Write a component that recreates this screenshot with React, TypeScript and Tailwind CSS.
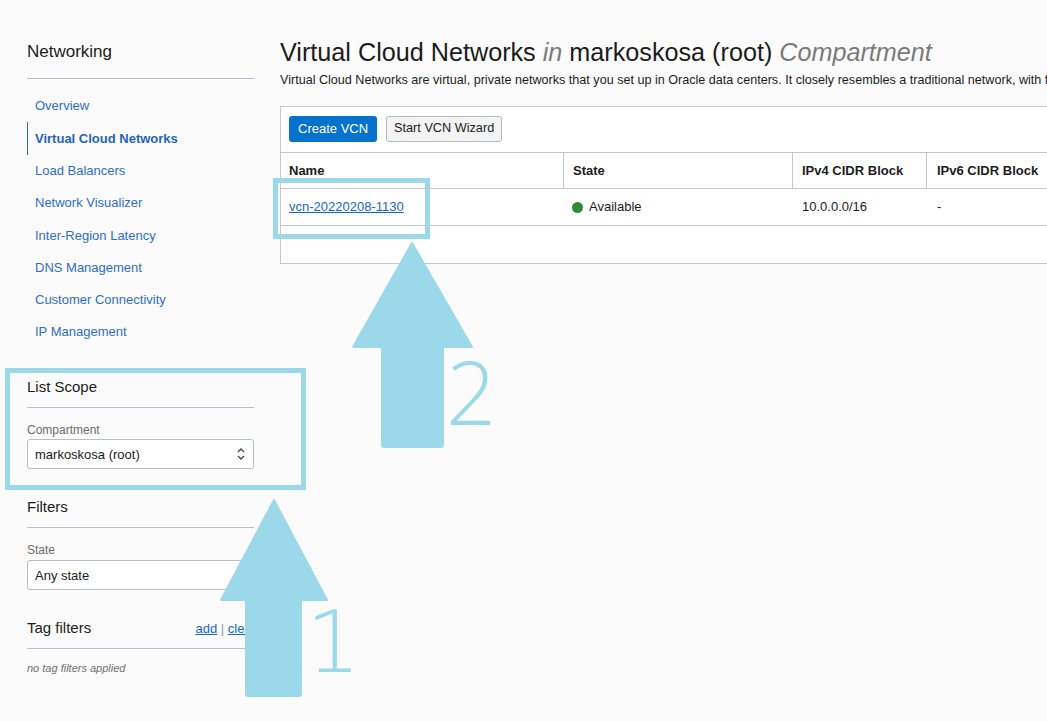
import { FC } from "react";

const navItems = [
  "Overview",
  "Virtual Cloud Networks",
  "Load Balancers",
  "Network Visualizer",
  "Inter-Region Latency",
  "DNS Management",
  "Customer Connectivity",
  "IP Management",
];

const UpDown: FC = () => (
  <svg width="10" height="14" viewBox="0 0 10 14" className="text-[#444]">
    <path d="M2 5 L5 2 L8 5" fill="none" stroke="currentColor" strokeWidth="1.3" />
    <path d="M2 9 L5 12 L8 9" fill="none" stroke="currentColor" strokeWidth="1.3" />
  </svg>
);

const SectionTitle: FC<{ label: string; right?: React.ReactNode }> = ({ label, right }) => (
  <div className="flex items-end justify-between border-b border-[#b9bfc7] pb-[10px] leading-[20px]">
    <span className="text-[15px] text-[#1c1c1c]">{label}</span>
    {right}
  </div>
);

const Sidebar: FC = () => {
  return (
    <aside className="w-[227px] ml-[27px] shrink-0 pt-[41px]">
      <div className="text-[17px] leading-[22px] text-[#1c1c1c] pb-[15px] border-b border-[#b9bfc7]">
        Networking
      </div>
      <ul className="mt-[11px]">
        {navItems.map((item, i) => (
          <li
            key={item}
            className={
              i === 1
                ? "h-[32.3px] flex items-center pl-[7px] border-l border-[#2c6cc4] text-[13px] font-bold text-[#1f63bd]"
                : "h-[32.3px] flex items-center pl-[8px] text-[13px] text-[#2f6ec6]"
            }
          >
            {item}
          </li>
        ))}
      </ul>

      <div className="mt-[29px]">
        <SectionTitle label="List Scope" />
        <div className="mt-[14px] text-[12px] leading-[16px] text-[#6b6b6b]">Compartment</div>
        <div className="mt-[1px] h-[30px] border border-[#b9bfc7] rounded-[3px] bg-white flex items-center justify-between pl-[7px] pr-[7px] text-[13px] text-[#1c1c1c]">
          <span>markoskosa (root)</span>
          <UpDown />
        </div>
      </div>

      <div className="mt-[28px]">
        <SectionTitle label="Filters" />
        <div className="mt-[14px] text-[12px] leading-[16px] text-[#6b6b6b]">State</div>
        <div className="mt-[2px] h-[30px] border border-[#b9bfc7] rounded-[3px] bg-white flex items-center justify-between pl-[7px] pr-[7px] text-[13px] text-[#1c1c1c]">
          <span>Any state</span>
          <UpDown />
        </div>
      </div>

      <div className="mt-[28px]">
        <SectionTitle
          label="Tag filters"
          right={
            <span className="text-[13px] leading-[18px] text-[#999] mr-[-2px]">
              <span className="text-[#1467c9] underline">add</span> | <span className="text-[#1467c9] underline">clear</span>
            </span>
          }
        />
        <div className="mt-[12px] text-[11px] leading-[14px] italic text-[#707070]">no tag filters applied</div>
      </div>
    </aside>
  );
};

const Main: FC = () => {
  return (
    <main className="ml-[26px] pt-[37px] min-w-0 flex-1">
      <h1 className="text-[25.2px] leading-[30px] text-[#1c1c1c] whitespace-nowrap">
        Virtual Cloud Networks <span className="italic text-[#7a7a7a]">in</span> markoskosa (root){" "}
        <span className="italic text-[#7a7a7a]">Compartment</span>
      </h1>
      <p className="mt-[3px] text-[12.6px] leading-[20px] text-[#1c1c1c] whitespace-nowrap">
        Virtual Cloud Networks are virtual, private networks that you set up in Oracle data centers. It closely
        resembles a traditional network, with firewall rules and specific types of communication gateways that you can
        choose to use.
      </p>

      <section className="mt-[16px] w-[900px] h-[158px] border border-[#c4c8ce] bg-white">
        <div className="flex gap-[9px] pl-[8px] pt-[9px] pb-[10px]">
          <button className="h-[26px] px-[9px] rounded-[3px] bg-[#0572ce] text-white text-[13px]">Create VCN</button>
          <button className="h-[26px] px-[7px] rounded-[3px] bg-[#f3f3f3] border border-[#b4b9c0] text-[#1c1c1c] text-[12.7px]">
            Start VCN Wizard
          </button>
        </div>
        <div className="grid grid-cols-[282px_229px_134px_1fr] text-[13px] text-[#1c1c1c]">
          <div className="h-[37px] flex items-center pl-[8px] font-bold border-t border-b border-[#c4c8ce]">Name</div>
          <div className="h-[37px] flex items-center pl-[9px] font-bold border-t border-b border-l border-[#c4c8ce]">State</div>
          <div className="h-[37px] flex items-center pl-[9px] font-bold border-t border-b border-l border-[#c4c8ce]">IPv4 CIDR Block</div>
          <div className="h-[37px] flex items-center pl-[10px] font-bold border-t border-b border-l border-[#c4c8ce]">IPv6 CIDR Block</div>

          <div className="h-[37px] flex items-center pl-[8px] border-b border-[#c4c8ce]">
            <span className="text-[#1467c9] underline">vcn-20220208-1130</span>
          </div>
          <div className="h-[37px] flex items-center pl-[9px] gap-[6px] border-b border-[#c4c8ce]">
            <span className="w-[11px] h-[11px] rounded-full bg-[#2f8a3a]" />
            Available
          </div>
          <div className="h-[37px] flex items-center pl-[10px] border-b border-[#c4c8ce]">10.0.0.0/16</div>
          <div className="h-[37px] flex items-center pl-[11px] border-b border-[#c4c8ce]">-</div>
        </div>
      </section>
    </main>
  );
};

const Annotations: FC = () => (
  <>
    <div className="absolute left-[273px] top-[178px] w-[157px] h-[61px] border-[5px] border-[#9bd8e9]" />
    <div className="absolute left-[5px] top-[368px] w-[301px] h-[122px] border-[5px] border-[#9bd8e9]" />
    <svg className="absolute left-0 top-0" width="1047" height="721" viewBox="0 0 1047 721">
      <path
        d="M412 243 L472 347 L443 347 L443 445 Q443 447 441 447 L384 447 Q382 447 382 445 L382 347 L353 347 Z"
        fill="#9bd8e9"
        strokeLinejoin="round"
        stroke="#9bd8e9"
        strokeWidth="2"
      />
      <path
        d="M274 500 L327 600 L301 600 L301 694 Q301 696 299 696 L248 696 Q246 696 246 694 L246 600 L221 600 Z"
        fill="#9bd8e9"
        strokeLinejoin="round"
        stroke="#9bd8e9"
        strokeWidth="2"
      />
    </svg>
    <div className="absolute left-[446px] top-[346px] text-[88px] leading-[90px] font-light text-[#9bd8e9] font-['Open_Sans',sans-serif]">
      2
    </div>
    <div className="absolute left-[306px] top-[597px] text-[86px] leading-[90px] font-extralight text-[#9bd8e9] font-['DejaVu_Sans',sans-serif]">
      1
    </div>
  </>
);

const App: FC = () => {
  return (
    <div className="relative w-[1047px] h-[721px] overflow-hidden bg-[#fbfbfb] flex font-['Liberation_Sans',Arial,sans-serif]">
      <Sidebar />
      <Main />
      <Annotations />
    </div>
  );
};

export default App;
